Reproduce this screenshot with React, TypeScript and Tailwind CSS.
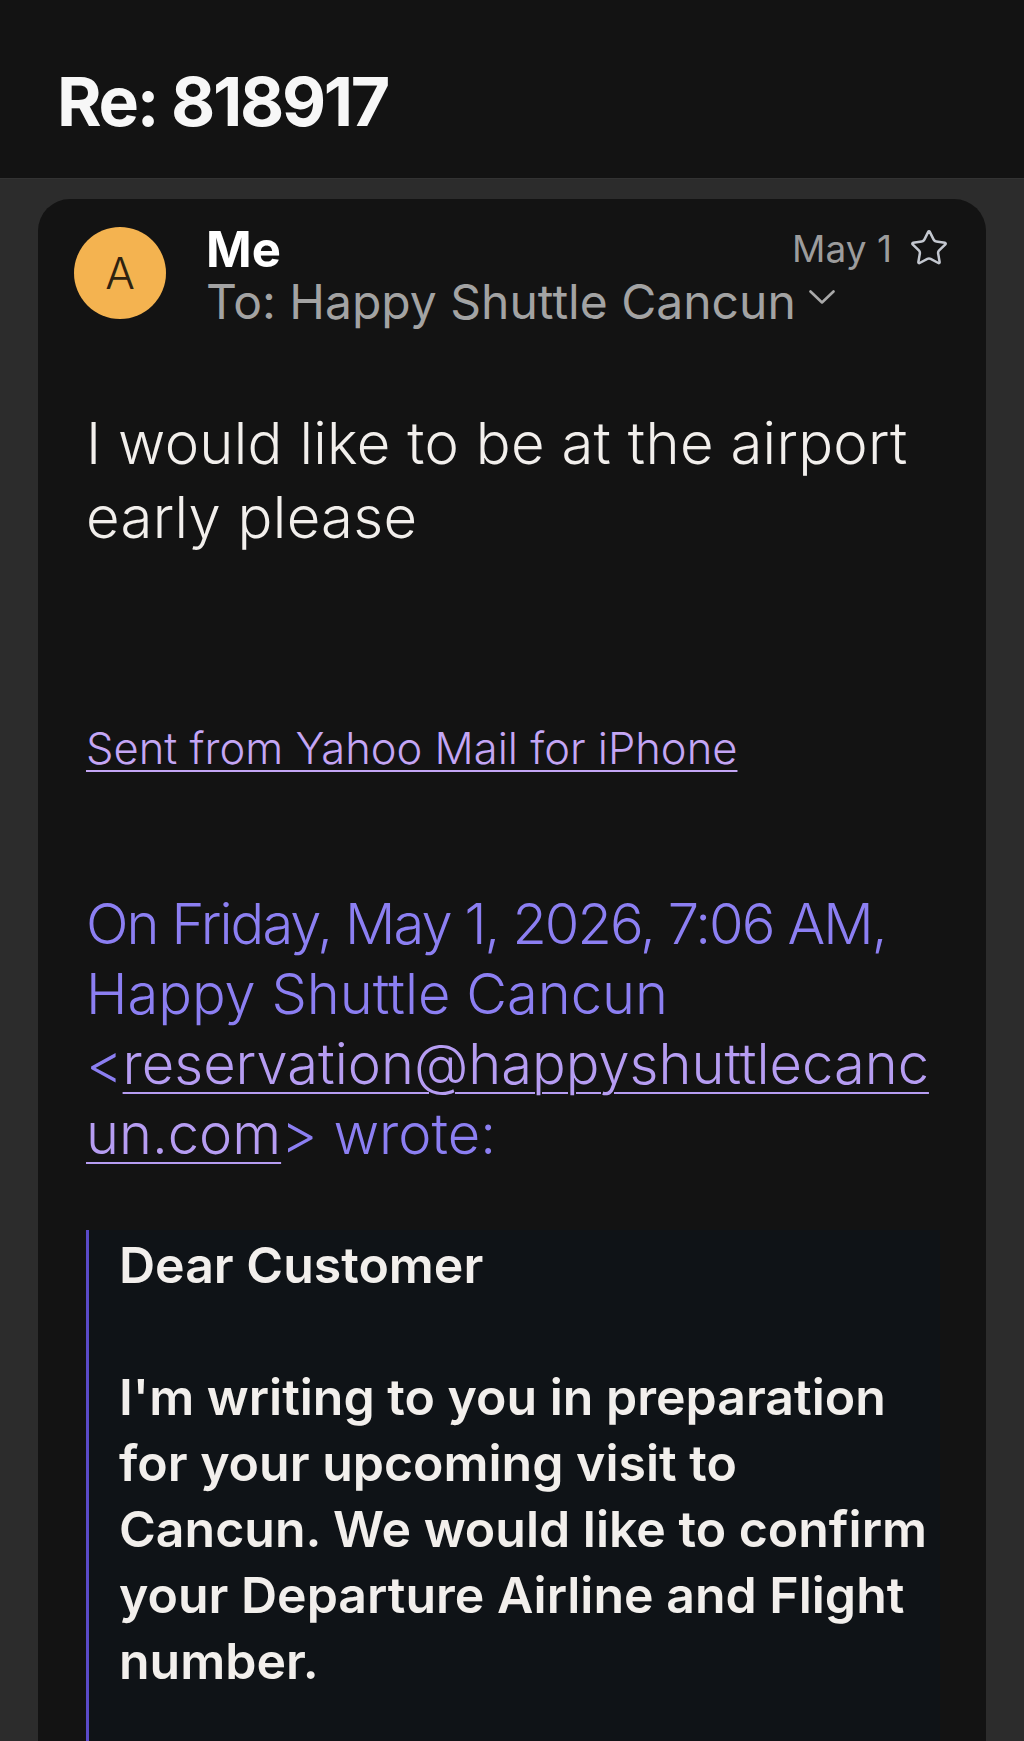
import { Star } from "lucide-react";

const font = { fontFamily: "Inter, 'Noto Sans', sans-serif" };

function Chevron() {
  return (
    <svg width="26" height="15" viewBox="0 0 26 15" fill="none" className="mt-[14px] ml-[13px] shrink-0">
      <polyline points="1.5,1.5 13,12.5 24.5,1.5" stroke="#a9a9a9" strokeWidth="2.6" strokeLinecap="round" strokeLinejoin="round" />
    </svg>
  );
}

export default function App() {
  return (
    <div className="h-[1741px] overflow-hidden bg-[#2c2c2c]" style={font}>
      {/* Title bar */}
      <div className="h-[179px] bg-[#131313] border-b border-[#333333] pl-[57px] pt-[67px]">
        <h1 className="text-[68px] leading-none font-bold text-[#f7f7f7] tracking-[-2.3px]">Re: 818917</h1>
      </div>

      <div className="px-[38px] pt-[20px]">
        <div className="bg-[#131313] rounded-t-[32px] pl-[36px] pr-[46px] pt-[28px] min-h-[1600px]">
          {/* Sender row */}
          <div className="flex">
            <div className="w-[92px] h-[92px] rounded-full bg-[#f4b350] flex items-center justify-center shrink-0">
              <span className="text-[44px] font-light text-[#2e2210] leading-none">A</span>
            </div>
            <div className="flex-1 pl-[40px] -mt-[3px]">
              <div className="flex items-start justify-between">
                <span className="text-[49px] leading-[52px] font-bold text-white">Me</span>
                <div className="flex items-start gap-[17px] -mr-[9px]">
                  <span className="text-[37px] leading-[44px] mt-[3px] text-[#9c9c9c]">May 1</span>
                  <Star size={40} strokeWidth={1.5} color="#c3c7cf" className="mt-[4px]" />
                </div>
              </div>
              <div className="flex items-start">
                <span className="text-[48px] leading-[52px] text-[#a3a3a3]">To: Happy Shuttle Cancun</span>
                <Chevron />
              </div>
            </div>
          </div>

          {/* Message body */}
          <div className="pl-[12px]">
            <p className="mt-[78px] text-[58px] leading-[74px] font-light text-[#f2efec] tracking-[0.3px]">
              I would like to be at the airport early please
            </p>

            <p className="mt-[166px] text-[43.5px] leading-[56px] font-light">
              <a className="text-[#c4a6f5] underline decoration-[2px] underline-offset-[6px]">Sent from Yahoo Mail for iPhone</a>
            </p>

            <p className="mt-[113px] text-[56px] leading-[70px] font-light text-[#8c7ff2]">
              <span className="tracking-[-1.9px]">On Friday, May 1, 2026, 7:06 AM,</span>
              <br />
              Happy Shuttle Cancun
              <br />
              &lt;<a className="text-[#b69df2] underline decoration-[2px] underline-offset-[8px]">reservation@happyshuttlecanc<br />un.com</a>&gt; wrote:
            </p>

            <blockquote className="mt-[61px] border-l-[3px] border-[#5b4bc9] bg-[#0f1317] pl-[30px] pt-[2px] pb-[200px] text-[50px] leading-[66px] font-semibold text-[#f2efec]">
              <p>Dear Customer</p>
              <p className="mt-[66px]">
                I'm writing to you in preparation
                <br />
                for your upcoming visit to
                <br />
                Cancun. We would like to confirm
                <br />
                your Departure Airline and Flight
                <br />
                number.
              </p>
            </blockquote>
          </div>
        </div>
      </div>
    </div>
  );
}
